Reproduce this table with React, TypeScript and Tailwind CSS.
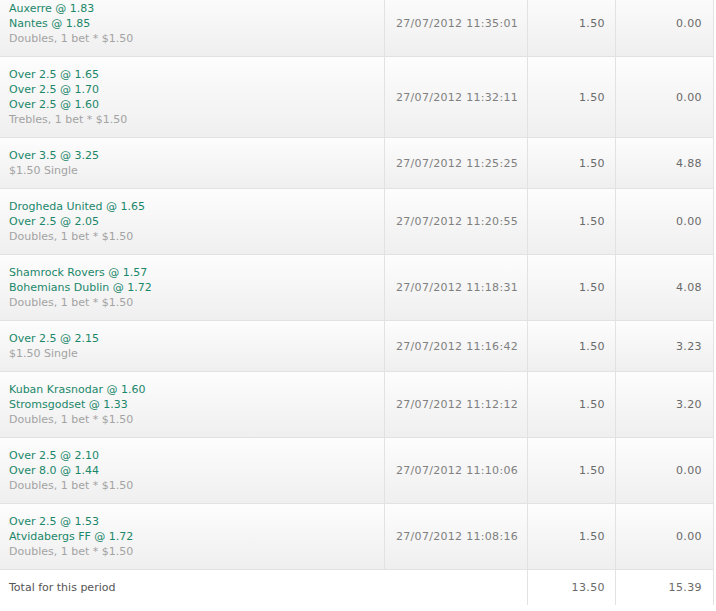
import React from 'react';

type Bet = {
    picks: string[];
    kind: string;
    placed: string;
    stake: string;
    returns: string;
};

const bets: Bet[] = [
    { picks: ['Auxerre @ 1.83', 'Nantes @ 1.85'], kind: 'Doubles, 1 bet * $1.50', placed: '27/07/2012 11:35:01', stake: '1.50', returns: '0.00' },
    { picks: ['Over 2.5 @ 1.65', 'Over 2.5 @ 1.70', 'Over 2.5 @ 1.60'], kind: 'Trebles, 1 bet * $1.50', placed: '27/07/2012 11:32:11', stake: '1.50', returns: '0.00' },
    { picks: ['Over 3.5 @ 3.25'], kind: '$1.50 Single', placed: '27/07/2012 11:25:25', stake: '1.50', returns: '4.88' },
    { picks: ['Drogheda United @ 1.65', 'Over 2.5 @ 2.05'], kind: 'Doubles, 1 bet * $1.50', placed: '27/07/2012 11:20:55', stake: '1.50', returns: '0.00' },
    { picks: ['Shamrock Rovers @ 1.57', 'Bohemians Dublin @ 1.72'], kind: 'Doubles, 1 bet * $1.50', placed: '27/07/2012 11:18:31', stake: '1.50', returns: '4.08' },
    { picks: ['Over 2.5 @ 2.15'], kind: '$1.50 Single', placed: '27/07/2012 11:16:42', stake: '1.50', returns: '3.23' },
    { picks: ['Kuban Krasnodar @ 1.60', 'Stromsgodset @ 1.33'], kind: 'Doubles, 1 bet * $1.50', placed: '27/07/2012 11:12:12', stake: '1.50', returns: '3.20' },
    { picks: ['Over 2.5 @ 2.10', 'Over 8.0 @ 1.44'], kind: 'Doubles, 1 bet * $1.50', placed: '27/07/2012 11:10:06', stake: '1.50', returns: '0.00' },
    { picks: ['Over 2.5 @ 1.53', 'Atvidabergs FF @ 1.72'], kind: 'Doubles, 1 bet * $1.50', placed: '27/07/2012 11:08:16', stake: '1.50', returns: '0.00' },
];

const BetHistory = () => {
    return (
        <div className="min-h-screen bg-white overflow-hidden font-['DejaVu_Sans',Verdana,sans-serif] text-[11px] leading-[15px]">
            <div className="w-[714px] -mt-[9px]">
                {bets.map((bet, i) => (
                    <div
                        key={i}
                        className="flex border-b border-[#e2e2e2] bg-gradient-to-b from-[#fdfdfd] to-[#efefef]"
                    >
                        <div className="w-[385px] border-r border-[#e2e2e2] pl-[9px] py-[10px]">
                            {bet.picks.map((pick, j) => (
                                <div key={j} className="text-[#1b876a]">{pick}</div>
                            ))}
                            <div className="text-[#a3a3a3]">{bet.kind}</div>
                        </div>
                        <div className="w-[143px] border-r border-[#e2e2e2] pl-[11px] flex items-center text-[#808080] tracking-[0.3px]">
                            {bet.placed}
                        </div>
                        <div className="w-[88px] border-r border-[#e2e2e2] pr-[10px] flex items-center justify-end text-[#6a6a6a] tracking-[0.4px]">
                            {bet.stake}
                        </div>
                        <div className="w-[98px] border-r border-[#e2e2e2] pr-[11px] flex items-center justify-end text-[#6a6a6a] tracking-[0.4px]">
                            {bet.returns}
                        </div>
                    </div>
                ))}

                {/* TOTAL ROW */}
                <div className="flex h-[35px] bg-white">
                    <div className="w-[385px] pl-[9px] flex items-center text-[#555]">Total for this period</div>
                    <div className="w-[143px] border-r border-[#e2e2e2]"></div>
                    <div className="w-[88px] border-r border-[#e2e2e2] pr-[10px] flex items-center justify-end text-[#6a6a6a] tracking-[0.4px]">13.50</div>
                    <div className="w-[98px] border-r border-[#e2e2e2] pr-[11px] flex items-center justify-end text-[#6a6a6a] tracking-[0.4px]">15.39</div>
                </div>
            </div>
        </div>
    );
};

export default BetHistory;
